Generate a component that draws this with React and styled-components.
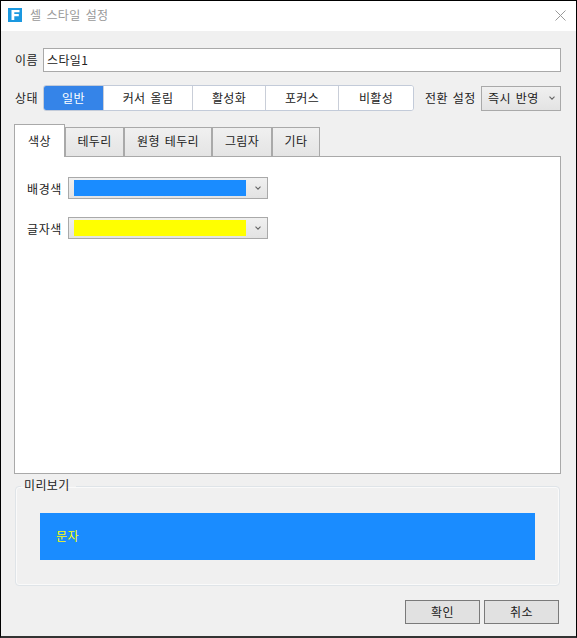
import React from 'react';
import styled, { createGlobalStyle } from 'styled-components';

const GlobalStyle = createGlobalStyle`
  html, body {
    margin: 0;
    padding: 0;
    background: #f0f0f0;
  }
  * {
    box-sizing: border-box;
  }
`;

const Window = styled.div`
  width: 577px;
  height: 638px;
  display: flex;
  flex-direction: column;
  background: #f0f0f0;
  border: 1px solid #000;
  border-bottom: 2px solid #333;
  font-family: "Noto Sans CJK KR", "Noto Sans", sans-serif;
  font-size: 12px;
  letter-spacing: 0.35px;
  word-spacing: 2px;
  color: #222;
`;

const TitleBar = styled.div`
  height: 30px;
  flex: none;
  display: flex;
  align-items: center;
  padding: 0 10px 2px 7px;
  background: #fff;
`;

const AppIcon = styled.div`
  width: 14px;
  height: 14px;
  flex: none;
  display: flex;
  align-items: center;
  justify-content: center;
  background: #1a98e0;
`;

const TitleText = styled.span`
  margin-left: 8px;
  padding-bottom: 1px;
  flex: 1;
  color: #999;
`;

const CloseIcon = styled.svg`
  width: 11px;
  height: 11px;
  display: block;
`;

const Body = styled.div`
  flex: 1;
  display: flex;
  flex-direction: column;
  padding: 17px 15px 0 13px;
`;

const Row = styled.div`
  display: flex;
  align-items: center;
`;

const Label = styled.span`
  width: 29px;
  flex: none;
  padding: 0 0 2px 1px;
`;

const NameInput = styled.div`
  flex: 1;
  height: 24px;
  display: flex;
  align-items: center;
  padding: 0 0 2px 3px;
  background: #fff;
  border: 1px solid #a9a9a9;
`;

const StateRow = styled(Row)`
  margin-top: 13px;
  height: 26px;
`;

const Segments = styled.div`
  width: 371px;
  height: 26px;
  flex: none;
  display: flex;
  background: #fff;
  border: 1px solid #c3cbd9;
  border-radius: 3px;
  overflow: hidden;
`;

const Segment = styled.div`
  width: ${(p) => p.$w}px;
  flex: none;
  display: flex;
  align-items: center;
  justify-content: center;
  padding-bottom: 1px;
  background: ${(p) => (p.$active ? '#3584e8' : '#fff')};
  color: ${(p) => (p.$active ? '#fff' : '#222')};
  border-right: ${(p) => (p.$last ? 'none' : '1px solid #c9ced8')};
`;

const TransitionLabel = styled.span`
  margin-left: 11px;
  width: 56px;
  flex: none;
  padding-bottom: 1px;
  white-space: nowrap;
`;

const Select = styled.div`
  width: ${(p) => p.$w}px;
  height: ${(p) => p.$h}px;
  flex: none;
  display: flex;
  align-items: center;
  background: linear-gradient(#f0f0f0, #e3e3e3);
  border: 1px solid #a9a9a9;
`;

const SelectText = styled.span`
  flex: 1;
  padding: 0 0 2px 6px;
  white-space: nowrap;
`;

const Chevron = styled.svg`
  width: 6px;
  height: 4px;
  flex: none;
  display: block;
  margin-right: 5px;
`;

const TabBar = styled.div`
  margin-top: 13px;
  height: 33px;
  flex: none;
  display: flex;
  align-items: flex-end;
  position: relative;
  z-index: 1;
`;

const Tab = styled.div`
  width: ${(p) => p.$w}px;
  height: ${(p) => (p.$active ? 33 : 30)}px;
  flex: none;
  display: flex;
  align-items: center;
  justify-content: center;
  background: ${(p) => (p.$active ? '#fff' : 'linear-gradient(#f0f0f0, #e4e4e4)')};
  border: 1px solid #a9a9a9;
  border-bottom: ${(p) => (p.$active ? 'none' : '1px solid #a9a9a9')};
  padding-bottom: ${(p) => (p.$active ? 2 : 3)}px;
`;

const Panel = styled.div`
  width: 547px;
  height: 318px;
  flex: none;
  margin-top: -1px;
  display: flex;
  flex-direction: column;
  gap: 18px;
  padding: 20px 0 0 12px;
  background: #fff;
  border: 1px solid #a9a9a9;
`;

const ColorRow = styled(Row)`
  height: 22px;
`;

const ColorLabel = styled.span`
  width: 41px;
  flex: none;
  letter-spacing: 0.6px;
`;

const Swatch = styled.div`
  width: 172px;
  height: 16px;
  flex: none;
  margin-left: 5px;
  margin-right: 9px;
  background: ${(p) => p.$color};
`;

const PreviewBox = styled.fieldset`
  width: 545px;
  height: 108px;
  flex: none;
  min-width: 0;
  margin: 4px 0 0 1px;
  padding: 0;
  border: 1px solid #dfe4e8;
  border-radius: 4px;
  box-shadow: inset 0 0 0 1px #fafafa;
`;

const Legend = styled.legend`
  margin-left: 5px;
  padding: 0 6px 2px 3px;
  line-height: 14px;
`;

const PreviewSample = styled.div`
  height: 47px;
  margin: 19px 24px 0;
  display: flex;
  align-items: center;
  padding: 0 0 2px 16px;
  background: #1a8cff;
  color: #ffff00;
`;

const Footer = styled.div`
  margin-top: 14px;
  display: flex;
  justify-content: flex-end;
  gap: 4px;
  padding-right: 2px;
`;

const Button = styled.div`
  width: 75px;
  height: 24px;
  display: flex;
  align-items: center;
  justify-content: center;
  padding-bottom: 2px;
  background: #e1e1e1;
  border: 1px solid #7a7a7a;
`;

const tabs = [
  { name: '색상', w: 51, active: true },
  { name: '테두리', w: 59 },
  { name: '원형 테두리', w: 88 },
  { name: '그림자', w: 60 },
  { name: '기타', w: 48 },
];

const states = [
  { name: '일반', w: 60, active: true },
  { name: '커서 올림', w: 89 },
  { name: '활성화', w: 73 },
  { name: '포커스', w: 73 },
  { name: '비활성', w: 74, last: true },
];

function ChevronIcon() {
  return (
    <Chevron viewBox="0 0 6 4">
      <path d="M0.5 0.7 L3 3.2 L5.5 0.7" fill="none" stroke="#666" strokeWidth="1.1" />
    </Chevron>
  );
}

function App() {
  return (
    <Window>
      <GlobalStyle />
      <TitleBar>
        <AppIcon>
          <svg width="9" height="10" viewBox="0 0 9 10">
            <path d="M0.5 0 H8.5 V2.3 H3.3 V4 H7.8 V6.2 H3.3 V10 H0.5 Z" fill="#fff" />
          </svg>
        </AppIcon>
        <TitleText>셀 스타일 설정</TitleText>
        <CloseIcon viewBox="0 0 11 11">
          <path d="M0.5 0.5 L10.5 10.5 M10.5 0.5 L0.5 10.5" fill="none" stroke="#999" strokeWidth="1" />
        </CloseIcon>
      </TitleBar>
      <Body>
        <Row>
          <Label>이름</Label>
          <NameInput>스타일1</NameInput>
        </Row>
        <StateRow>
          <Label>상태</Label>
          <Segments>
            {states.map((s) => (
              <Segment key={s.name} $w={s.w} $active={s.active} $last={s.last}>
                {s.name}
              </Segment>
            ))}
          </Segments>
          <TransitionLabel>전환 설정</TransitionLabel>
          <Select $w={80} $h={25}>
            <SelectText>즉시 반영</SelectText>
            <ChevronIcon />
          </Select>
        </StateRow>
        <TabBar>
          {tabs.map((t) => (
            <Tab key={t.name} $w={t.w} $active={t.active}>
              {t.name}
            </Tab>
          ))}
        </TabBar>
        <Panel>
          <ColorRow>
            <ColorLabel>배경색</ColorLabel>
            <Select $w={200} $h={22}>
              <Swatch $color="#1a8cff" />
              <ChevronIcon />
            </Select>
          </ColorRow>
          <ColorRow>
            <ColorLabel>글자색</ColorLabel>
            <Select $w={200} $h={22}>
              <Swatch $color="#ffff00" />
              <ChevronIcon />
            </Select>
          </ColorRow>
        </Panel>
        <PreviewBox>
          <Legend>미리보기</Legend>
          <PreviewSample>문자</PreviewSample>
        </PreviewBox>
        <Footer>
          <Button>확인</Button>
          <Button>취소</Button>
        </Footer>
      </Body>
    </Window>
  );
}

export default App;
